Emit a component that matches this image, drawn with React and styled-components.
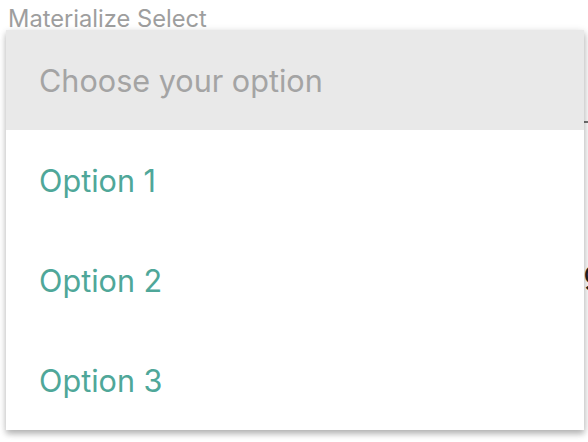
import React from 'react';
import styled, { createGlobalStyle } from 'styled-components';

const GlobalStyle = createGlobalStyle`
    html, body {
        margin: 0;
        padding: 0;
        background: #fff;
        overflow: hidden;
    }
    body {
        font-family: Inter, Roboto, "Noto Sans", sans-serif;
    }
`;

const Page = styled.div`
    position: relative;
    width: 588px;
    height: 442px;
    overflow: hidden;
`;

const Label = styled.div`
    padding: 5px 0 0 8px;
    font-size: 23.7px;
    line-height: 28px;
    color: #9e9e9e;
`;

const Field = styled.div`
    margin: 0 0 0 8px;
    height: 88px;
    border-bottom: 2px solid #757575;
    width: 590px;
`;

const BehindText = styled.div`
    display: flex;
    justify-content: flex-end;
    width: 603px;
    padding-top: 130px;
    font-size: 32px;
    color: #222;
    white-space: nowrap;
`;

const Dropdown = styled.ul`
    position: absolute;
    left: 6px;
    top: 30px;
    width: 578px;
    margin: 0;
    padding: 0;
    list-style: none;
    background: #fff;
    box-shadow: 0 4px 6px rgba(0, 0, 0, 0.22), 1px 2px 8px rgba(0, 0, 0, 0.14);
`;

const Item = styled.li`
    display: flex;
    align-items: center;
    height: 100px;
    padding: 0 33px;
    font-size: 30.6px;
    background: ${p => (p.disabled ? '#e9e9e9' : '#fff')};
    color: ${p => (p.disabled ? '#a4a4a4' : '#4fa799')};
`;

const options = ['Option 1', 'Option 2', 'Option 3'];

export default function App() {
    return (
        <Page>
            <GlobalStyle />
            <Label>Materialize Select</Label>
            <Field />
            <BehindText>Loading</BehindText>
            <Dropdown>
                <Item disabled>Choose your option</Item>
                {options.map(o => (
                    <Item key={o}>{o}</Item>
                ))}
            </Dropdown>
        </Page>
    );
}
